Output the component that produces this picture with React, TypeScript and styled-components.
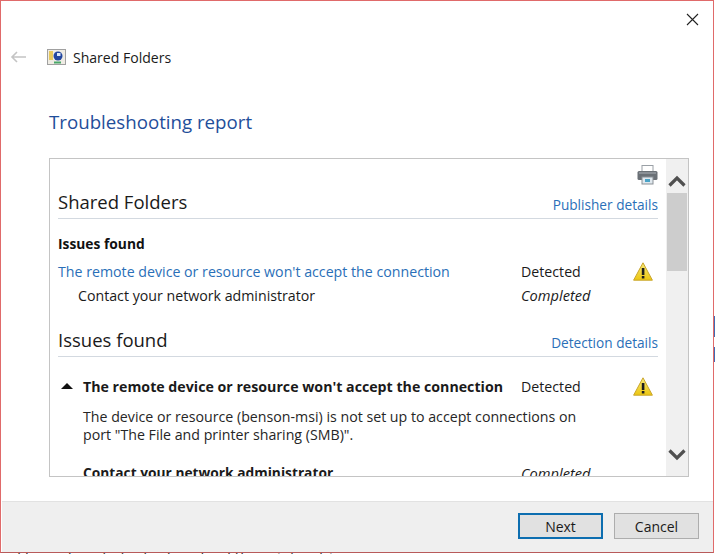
import React, { FC } from 'react';
import styled, { createGlobalStyle } from 'styled-components';

const GlobalStyle = createGlobalStyle`
  html, body {
    margin: 0;
    padding: 0;
    background: #fff;
  }
  body {
    font-family: "Open Sans", "Noto Sans", sans-serif;
    color: #1a1a1a;
  }
`;

const Screen = styled.div`
  width: 715px;
  height: 554px;
  overflow: hidden;
  display: flex;
  flex-direction: column;
  background: #fff;
`;

const TopArea = styled.div`
  display: flex;
  flex: none;
`;

const Dialog = styled.div`
  width: 714px;
  height: 553px;
  flex: none;
  box-sizing: border-box;
  border: 1px solid #e06a6a;
  border-bottom-color: #b85a5a;
  display: flex;
  flex-direction: column;
`;

const SideStrip = styled.div`
  width: 1px;
  flex: none;
  padding-top: 316px;
`;

const SideMark = styled.div<{ $height: number; $gap?: number }>`
  height: ${p => p.$height}px;
  margin-bottom: ${p => p.$gap ?? 0}px;
  background: #3f6db5;
`;

const CloseRow = styled.div`
  height: 46px;
  flex: none;
  display: flex;
  justify-content: flex-end;
  padding: 12px 14px 0 0;
  box-sizing: border-box;
`;

const NavRow = styled.div`
  display: flex;
  align-items: center;
  height: 20px;
  padding-left: 9px;
`;

const BackArrow = styled.svg`
  width: 17px;
  height: 12px;
  margin-right: 20px;
`;

const AppIcon = styled.svg`
  width: 19px;
  height: 16px;
  margin-right: 7px;
`;

const NavTitle = styled.span`
  font-size: 14.05px;
`;

const PageTitle = styled.h1`
  margin: 41px 0 0 48px;
  font-size: 18.7px;
  line-height: 28px;
  font-weight: 400;
  color: #1f4e9a;
`;

const Report = styled.div`
  margin: 22px 0 0 48px;
  width: 640px;
  height: 319px;
  flex: none;
  box-sizing: border-box;
  border: 1px solid #c4c4c4;
  display: flex;
  overflow: hidden;
`;

const ReportBody = styled.div`
  flex: 1;
  min-width: 0;
  padding: 0 8px;
  overflow: hidden;
`;

const PrintRow = styled.div`
  height: 28px;
  box-sizing: border-box;
  display: flex;
  justify-content: flex-end;
  align-items: flex-end;
  padding: 0 0 2px;
`;

const SectionHead = styled.div`
  display: flex;
  justify-content: space-between;
  align-items: flex-end;
  border-bottom: 1px solid #d3d9e0;
  height: 31px;
`;

const SectionTitle = styled.span`
  font-size: 18.5px;
  line-height: 32px;
`;

const HeadLink = styled.span`
  font-size: 13.65px;
  line-height: 26px;
  color: #2a6fb8;
`;

const Subhead = styled.div`
  margin: 16px 0 6px;
  font-size: 13.8px;
  line-height: 18px;
  font-weight: 700;
  color: #111;
`;

const ResultRow = styled.div<{ $indent?: number; $height?: number }>`
  display: grid;
  grid-template-columns: 1fr 112px 25px;
  align-items: center;
  height: ${p => p.$height ?? 24}px;
  padding-left: ${p => p.$indent ?? 0}px;
  font-size: 14.2px;
`;

const DetailRow = styled(ResultRow)`
  margin-top: 16px;
`;

const IssueLink = styled.span`
  color: #2a6fb8;
  white-space: nowrap;
`;

const StatusText = styled.span<{ $italic?: boolean }>`
  font-style: ${p => (p.$italic ? 'italic' : 'normal')};
  font-size: ${p => (p.$italic ? '14.6px' : 'inherit')};
`;

const SecondHead = styled(SectionHead)`
  margin-top: 18px;
`;

const DetailTitle = styled.div`
  display: flex;
  align-items: center;
  font-weight: 700;
  white-space: nowrap;
`;

const ContactTitle = styled(DetailTitle)`
  font-size: 13.76px;
`;

const Caret = styled.svg`
  width: 12px;
  height: 6px;
  margin: 0 10px 0 3px;
`;

const DetailText = styled.p`
  margin: 9px 0 0 25px;
  width: 520px;
  font-size: 14.2px;
  line-height: 18px;
  color: #262626;
`;

const ScrollBar = styled.div`
  width: 22px;
  flex: none;
  background: #f0f0f0;
  display: flex;
  flex-direction: column;
  align-items: center;
`;

const ScrollButton = styled.svg`
  width: 18px;
  height: 12px;
  flex: none;
`;

const UpButton = styled(ScrollButton)`
  margin-top: 16px;
`;

const Thumb = styled.div`
  width: 20px;
  height: 78px;
  margin-top: 6px;
  background: #cdcdcd;
  flex: none;
`;

const DownButton = styled(ScrollButton)`
  margin-top: 178px;
`;

const Footer = styled.div`
  margin: auto 0 0 1px;
  height: 51px;
  flex: none;
  box-sizing: border-box;
  background: #efefef;
  border-top: 1px solid #e2e2e2;
  display: flex;
  justify-content: flex-end;
  align-items: center;
  gap: 11px;
  padding: 0 14px 2px 0;
`;

const Button = styled.button<{ $primary?: boolean }>`
  width: 85px;
  height: 26px;
  padding: 0;
  box-sizing: border-box;
  background: #e1e1e1;
  border: ${p => (p.$primary ? '2px solid #0d6eb0' : '1px solid #adadad')};
  font: inherit;
  font-size: 14px;
  color: #1a1a1a;
`;

const ClippedText = styled.div`
  height: 1px;
  flex: none;
  overflow: hidden;
  padding-left: 17px;
  font-size: 15px;
  line-height: 16px;
  white-space: nowrap;
  color: #333;
`;

const ClippedLine = styled.div`
  margin-top: -5px;
`;

const WarningIcon: FC = () => (
  <svg width="20" height="19" viewBox="0 0 20 19">
    <defs>
      <linearGradient id="warn" x1="0" y1="0" x2="0" y2="1">
        <stop offset="0" stopColor="#f7e97a" />
        <stop offset="1" stopColor="#ecc60f" />
      </linearGradient>
    </defs>
    <path d="M10 0.8 L19.4 18.2 H0.6 Z" fill="url(#warn)" stroke="#c9a52c" strokeLinejoin="round" />
    <rect x="8.8" y="6" width="2.6" height="7" fill="#1e1e1e" />
    <rect x="8.8" y="14" width="2.6" height="2.5" fill="#1e1e1e" />
  </svg>
);

const App: FC = () => (
  <Screen>
    <GlobalStyle />
    <TopArea>
      <Dialog>
        <CloseRow>
          <svg width="13" height="13" viewBox="0 0 13 13">
            <path d="M1 1 L12 12 M12 1 L1 12" stroke="#222" strokeWidth="1.1" />
          </svg>
        </CloseRow>
        <NavRow>
          <BackArrow viewBox="0 0 17 12">
            <path d="M16 6 H2 M7 1 L2 6 L7 11" fill="none" stroke="#c4c4c4" strokeWidth="1.6" />
          </BackArrow>
          <AppIcon viewBox="0 0 19 16">
            <rect x="0.5" y="0.5" width="18" height="15" fill="#efece4" stroke="#a0a0a0" />
            <rect x="2" y="2" width="4" height="9" fill="#e8c95c" />
            <circle cx="11" cy="7" r="4.5" fill="#24479f" />
            <rect x="10" y="4" width="3.5" height="3" fill="#dce8f8" />
            <rect x="7" y="12.5" width="7" height="2" fill="#49a86a" />
          </AppIcon>
          <NavTitle>Shared Folders</NavTitle>
        </NavRow>
        <PageTitle>Troubleshooting report</PageTitle>
        <Report>
          <ReportBody>
            <PrintRow>
              <svg width="21" height="20" viewBox="0 0 21 20">
                <rect x="5" y="0.5" width="11" height="7" fill="#fff" stroke="#9aa0a6" />
                <rect x="0.5" y="6" width="20" height="9" rx="1.5" fill="#6a7076" />
                <rect x="2" y="7" width="17" height="2" fill="#8a9096" />
                <rect x="5" y="12" width="11" height="7" fill="#dfe8ee" stroke="#8a9096" />
                <rect x="8" y="14" width="5" height="3" fill="#4aa3c7" />
              </svg>
            </PrintRow>
            <SectionHead>
              <SectionTitle>Shared Folders</SectionTitle>
              <HeadLink>Publisher details</HeadLink>
            </SectionHead>
            <Subhead>Issues found</Subhead>
            <ResultRow>
              <IssueLink>The remote device or resource won't accept the connection</IssueLink>
              <StatusText>Detected</StatusText>
              <WarningIcon />
            </ResultRow>
            <ResultRow $indent={20}>
              <span>Contact your network administrator</span>
              <StatusText $italic>Completed</StatusText>
              <span />
            </ResultRow>
            <SecondHead>
              <SectionTitle>Issues found</SectionTitle>
              <HeadLink>Detection details</HeadLink>
            </SecondHead>
            <DetailRow $height={26}>
              <DetailTitle>
                <Caret viewBox="0 0 14 7">
                  <path d="M7 0 L14 7 H0 Z" fill="#111" />
                </Caret>
                The remote device or resource won't accept the connection
              </DetailTitle>
              <StatusText>Detected</StatusText>
              <WarningIcon />
            </DetailRow>
            <DetailText>
              The device or resource (benson-msi) is not set up to accept connections on port "The File and printer sharing (SMB)".
            </DetailText>
            <ResultRow $indent={25} $height={57}>
              <ContactTitle>Contact your network administrator</ContactTitle>
              <StatusText $italic>Completed</StatusText>
              <span />
            </ResultRow>
          </ReportBody>
          <ScrollBar>
            <UpButton viewBox="0 0 18 12">
              <path d="M1.5 10.5 L9 3 L16.5 10.5" fill="none" stroke="#505050" strokeWidth="3.2" />
            </UpButton>
            <Thumb />
            <DownButton viewBox="0 0 18 12">
              <path d="M1.5 1.5 L9 9 L16.5 1.5" fill="none" stroke="#505050" strokeWidth="3.2" />
            </DownButton>
          </ScrollBar>
        </Report>
        <Footer>
          <Button $primary>Next</Button>
          <Button>Cancel</Button>
        </Footer>
      </Dialog>
      <SideStrip>
        <SideMark $height={21} $gap={10} />
        <SideMark $height={15} />
      </SideStrip>
    </TopArea>
    <ClippedText>
      <ClippedLine>I have done to try to download the printer driver</ClippedLine>
    </ClippedText>
  </Screen>
);

export default App;
